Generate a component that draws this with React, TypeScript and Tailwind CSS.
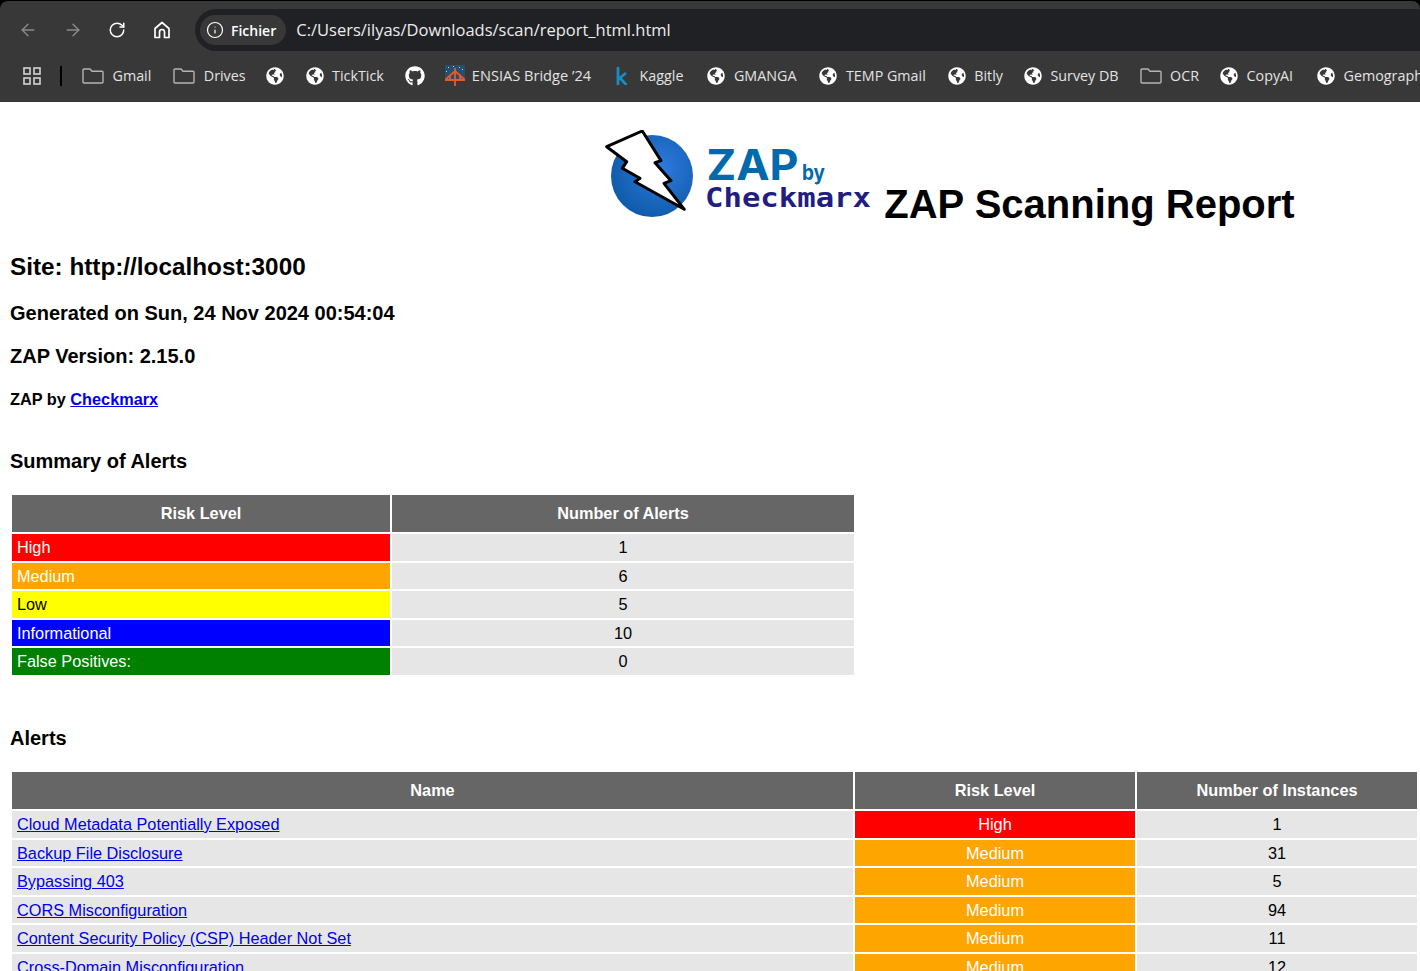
import { ArrowLeft, ArrowRight, RotateCw, Info } from "lucide-react";
import { FaGithub, FaGlobeAmericas } from "react-icons/fa";

type Mark = "folder" | "globe" | "github" | "bridge" | "kaggle";

// shift: small nudges, the bookmark widths don't follow one fixed gap
const bookmarks: { label: string; icon: Mark; shift?: string; textCls?: string }[] = [
  { label: "Gmail", icon: "folder", shift: "gap-[8.5px]" },
  { label: "Drives", icon: "folder", shift: "gap-[8.5px]" },
  { label: "", icon: "globe", shift: "-ml-[2px]" },
  { label: "TickTick", icon: "globe", shift: "gap-[8.5px]" },
  { label: "", icon: "github", shift: "-ml-[1px]" },
  { label: "ENSIAS Bridge ’24", icon: "bridge", shift: "-ml-[2px] gap-[7px]", textCls: "text-[14.6px]" },
  { label: "Kaggle", icon: "kaggle", shift: "gap-[8.5px]" },
  { label: "GMANGA", icon: "globe", shift: "ml-[2px] gap-[8.5px]" },
  { label: "TEMP Gmail", icon: "globe", shift: "ml-[1px] gap-[8.5px]" },
  { label: "Bitly", icon: "globe", shift: "gap-[8.5px]" },
  { label: "Survey DB", icon: "globe", shift: "-ml-[1px] gap-[8.5px]" },
  { label: "OCR", icon: "folder", shift: "-ml-[1px] gap-[8.5px]" },
  { label: "CopyAI", icon: "globe", shift: "-ml-[1px] gap-[8.5px]" },
  { label: "Gemographics", icon: "globe", shift: "ml-[2px] gap-[8.5px]" },
];

const summary = [
  { level: "High", count: "1", cls: "bg-[#ff0000] text-white" },
  { level: "Medium", count: "6", cls: "bg-[#ffa500] text-white" },
  { level: "Low", count: "5", cls: "bg-[#ffff00] text-black" },
  { level: "Informational", count: "10", cls: "bg-[#0000ff] text-white" },
  { level: "False Positives:", count: "0", cls: "bg-[#008000] text-white" },
];

const alerts = [
  { name: "Cloud Metadata Potentially Exposed", risk: "High", count: "1" },
  { name: "Backup File Disclosure", risk: "Medium", count: "31" },
  { name: "Bypassing 403", risk: "Medium", count: "5" },
  { name: "CORS Misconfiguration", risk: "Medium", count: "94" },
  { name: "Content Security Policy (CSP) Header Not Set", risk: "Medium", count: "11" },
  { name: "Cross-Domain Misconfiguration", risk: "Medium", count: "12" },
];

function FolderIcon() {
  return (
    <svg width="22" height="16" viewBox="0 0 22 16" fill="none" stroke="#b4b4b4" strokeWidth="1.4">
      <path d="M1 2 a1 1 0 0 1 1-1 h6 l2 2.200 h10 a1 1 0 0 1 1 1 v9.800 a1 1 0 0 1-1 1 h-18 a1 1 0 0 1-1-1 z" />
    </svg>
  );
}

function BridgeIcon() {
  return (
    <svg width="20" height="21" viewBox="0 0 20 21">
      <rect x="0" y="0" width="20" height="16" fill="#24506e" />
      <path d="M3 2h1v1H3z M8 1h1v1H8z M14 2h1v1h-1z M17 4h1v1h-1z M1 6h1v1H1z" fill="#c9d6df" />
      <path d="M0 15 L10 6 L20 15 M5 11 V15 M15 11 V15 M10 3 V21" stroke="#e8592a" strokeWidth="1.800" fill="none" />
      <rect x="0" y="14" width="20" height="2" fill="#e8592a" />
    </svg>
  );
}

function KaggleIcon() {
  return (
    <svg width="18" height="18" viewBox="0 0 18 18" fill="none" stroke="#1a8cc4" strokeWidth="2.800">
      <path d="M5 0 V18 M13 6 L5.500 12 M6.500 10.500 L13.500 18" />
    </svg>
  );
}

function BookmarkIcon({ icon }: { icon: Mark }) {
  if (icon === "folder") return <FolderIcon />;
  if (icon === "globe") return <FaGlobeAmericas className="w-[18px] h-[18px] text-white" />;
  if (icon === "github") return <FaGithub className="w-5 h-5 text-white" />;
  if (icon === "bridge") return <BridgeIcon />;
  return <KaggleIcon />;
}

function BrowserBar() {
  return (
    <div className="h-[102px] bg-black pt-px font-['Open_Sans',sans-serif]">
      <div className="h-[101px] bg-[#383838] rounded-t-[8px]">
        {/* Toolbar */}
        <div className="h-[50px] pt-[8px] flex">
          <div className="flex items-center w-[195px] pl-[18px] gap-[25px] text-white">
            <ArrowLeft className="w-5 h-5 text-[#8b8b8b]" strokeWidth={1.6} />
            <ArrowRight className="w-5 h-5 text-[#8b8b8b]" strokeWidth={1.6} />
            <RotateCw className="w-[18px] h-[18px]" strokeWidth={2} />
            <svg width="18" height="20" viewBox="0 0 18 20" fill="none" stroke="white" strokeWidth="1.7" className="ml-[2px]">
              <path d="M2 8.500 L9 2.500 L16 8.500 V17.500 H11.500 V12 a2.500 2.500 0 0 0-5 0 V17.500 H2 Z" strokeLinejoin="round" />
            </svg>
          </div>
          <div className="flex-1 flex items-center bg-[#202124] rounded-l-full pl-[5px]">
            <div className="flex items-center h-[30px] gap-[7px] pl-[6px] pr-[10px] rounded-full bg-[#383838] text-white">
              <Info className="w-[18px] h-[18px]" strokeWidth={1.6} />
              <span className="text-[14px] font-semibold">Fichier</span>
            </div>
            <span className="ml-[10px] text-[#ececec] text-[16.5px]">C:/Users/ilyas/Downloads/scan/report_html.html</span>
          </div>
        </div>
        {/* Bookmarks */}
        <div className="h-[51px] flex items-center pl-[23px] pb-[1px] overflow-hidden whitespace-nowrap text-[#e3e3e3] text-[14.3px]">
          <svg width="18" height="18" viewBox="0 0 18 18" fill="none" stroke="#d4d4d4" strokeWidth="1.600" className="shrink-0 mr-[19px]">
            <rect x="1" y="1" width="6" height="6" />
            <rect x="11" y="1" width="6" height="6" />
            <rect x="1" y="11" width="6" height="6" />
            <rect x="11" y="11" width="6" height="6" />
          </svg>
          <div className="w-[2px] h-[20px] bg-black shrink-0 mr-[20px]" />
          <div className="flex items-center gap-[22px]">
            {bookmarks.map((b, i) => (
              <div key={i} className={`flex items-center ${b.shift ?? ""}`}>
                <BookmarkIcon icon={b.icon} />
                {b.label && <span className={b.textCls}>{b.label}</span>}
              </div>
            ))}
          </div>
        </div>
      </div>
    </div>
  );
}

function ZapLogo() {
  return (
    <svg width="270" height="92" viewBox="0 0 270 92" className="shrink-0 mb-[5px]">
      <defs>
        <radialGradient id="ball" cx="0.6" cy="0.4" r="0.62">
          <stop offset="0" stopColor="#2f7ae0" />
          <stop offset="1" stopColor="#0f5cab" />
        </radialGradient>
      </defs>
      <circle cx="48" cy="46" r="41" fill="url(#ball)" />
      <path
        d="M2.700 16.700 L38.300 1 L57 30.700 L51 32.700 L67 50.700 L60 53.300 L80.300 79.300 L31 51.700 L36 48.300 L18.300 38.300 L22.700 31.700 Z"
        fill="white"
        stroke="black"
        strokeWidth="3"
        strokeLinejoin="round"
      />
      <text x="102.500" y="49.500" fontFamily="Inter, sans-serif" fontWeight="700" fontSize="42.500" fill="#0369ad" textLength="92" lengthAdjust="spacingAndGlyphs">ZAP</text>
      <text x="198" y="49.500" fontFamily="Inter, sans-serif" fontWeight="700" fontSize="21" fill="#0369ad" textLength="23" lengthAdjust="spacingAndGlyphs">by</text>
      <text x="101" y="77" fontFamily="'DejaVu Sans Mono', monospace" fontWeight="700" fontSize="26" fill="#221d80" textLength="166" lengthAdjust="spacingAndGlyphs">Checkmarx</text>
    </svg>
  );
}

function SummaryTable() {
  return (
    <div className="mt-[22px] ml-[12px] grid grid-cols-[378px_462px] grid-rows-[37px_repeat(5,26.5px)] gap-[2px]">
      <div className="flex items-center justify-center bg-[#666666] text-white font-bold">Risk Level</div>
      <div className="flex items-center justify-center bg-[#666666] text-white font-bold">Number of Alerts</div>
      {summary.map((row) => (
        <div key={row.level} className="contents">
          <div className={`flex items-center pl-[5px] ${row.cls}`}>{row.level}</div>
          <div className="flex items-center justify-center bg-[#e6e6e6] text-black">{row.count}</div>
        </div>
      ))}
    </div>
  );
}

function AlertsTable() {
  return (
    <div className="mt-[22px] ml-[12px] grid grid-cols-[841px_280px_280px] grid-rows-[37px_repeat(6,26.5px)] gap-[2px]">
      <div className="flex items-center justify-center bg-[#666666] text-white font-bold">Name</div>
      <div className="flex items-center justify-center bg-[#666666] text-white font-bold">Risk Level</div>
      <div className="flex items-center justify-center bg-[#666666] text-white font-bold">Number of Instances</div>
      {alerts.map((row) => (
        <div key={row.name} className="contents">
          <div className="flex items-center pl-[5px] bg-[#e6e6e6]">
            <a href="#" className="text-[#0000ee] underline">{row.name}</a>
          </div>
          <div className={`flex items-center justify-center text-white ${row.risk === "High" ? "bg-[#ff0000]" : "bg-[#ffa500]"}`}>
            {row.risk}
          </div>
          <div className="flex items-center justify-center bg-[#e6e6e6] text-black">{row.count}</div>
        </div>
      ))}
    </div>
  );
}

export default function App() {
  return (
    <div className="h-[971px] overflow-hidden bg-white font-['Liberation_Sans',Arial,sans-serif] text-[16.3px] text-black">
      <BrowserBar />
      <div className="flex items-end justify-center mt-[28px] pl-[479px]">
        <ZapLogo />
        <h1 className="text-[40px] font-bold leading-[46px] ml-[10px]">ZAP Scanning Report</h1>
      </div>
      <div className="pl-[10px]">
        <h2 className="mt-[26px] text-[24.3px] font-bold leading-[28px]">Site: http://localhost:3000</h2>
        <h3 className="mt-[21px] text-[20px] font-bold leading-[23px]">Generated on Sun, 24 Nov 2024 00:54:04</h3>
        <h3 className="mt-[20px] text-[20px] font-bold leading-[23px]">ZAP Version: 2.15.0</h3>
        <h4 className="mt-[21px] text-[16.3px] font-bold leading-[20px]">
          ZAP by <a href="#" className="text-[#0000ee] underline">Checkmarx</a>
        </h4>
        <h3 className="mt-[41px] text-[20px] font-bold leading-[23px]">Summary of Alerts</h3>
      </div>
      <SummaryTable />
      <h3 className="mt-[52.5px] pl-[10px] text-[20px] font-bold leading-[23px]">Alerts</h3>
      <AlertsTable />
    </div>
  );
}
